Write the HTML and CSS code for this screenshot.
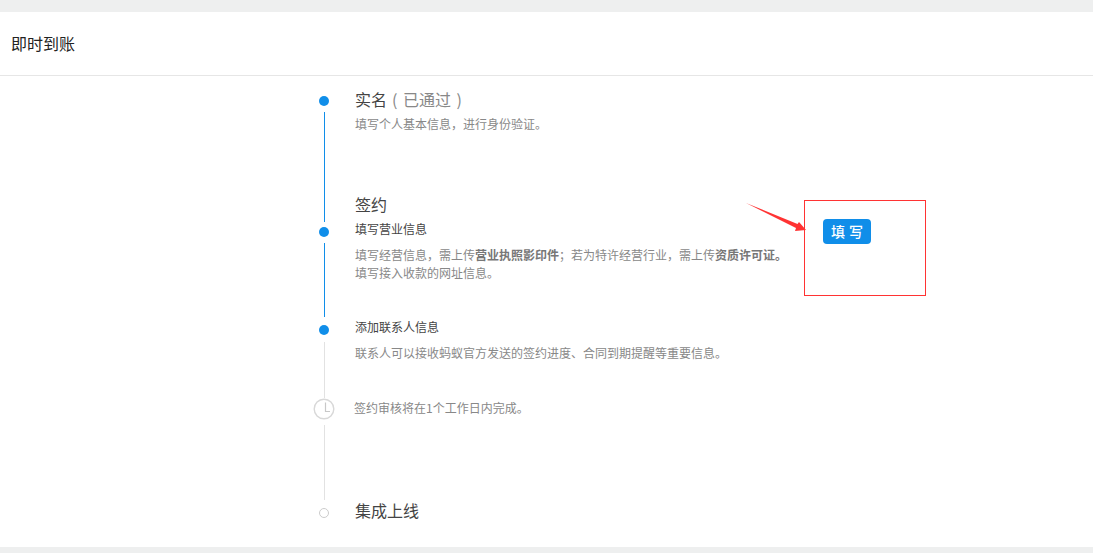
FILE: index.html
```html
<!DOCTYPE html>
<html lang="zh-CN">
<head>
  <meta charset="UTF-8">
  <title>即时到账</title>
  <link rel="stylesheet" href="styles.css">
</head>
<body>

<div class="page">
  <header class="page-header">即时到账</header>

  <main class="flow">
    <div class="rail">
      <span class="dot"></span>
      <span class="line line-first"></span>
      <span class="dot"></span>
      <span class="line line-second"></span>
      <span class="dot"></span>
      <span class="line line-third grey"></span>
      <svg class="clock" width="22" height="22" viewBox="0 0 22 22">
        <circle cx="11" cy="11" r="9.8" fill="none" stroke="#d8d8d8" stroke-width="1.4"/>
        <path d="M12.5 4.5v9h4.5" fill="none" stroke="#c8c8c8" stroke-width="1.2"/>
      </svg>
      <span class="line line-fourth grey"></span>
      <span class="dot ring"></span>
    </div>

    <div class="steps">
      <h2 class="step-title">实名<span class="muted">( 已通过 )</span></h2>
      <p class="desc">填写个人基本信息，进行身份验证。</p>

      <h2 class="step-title sign">签约</h2>
      <h3 class="sub-title first">填写营业信息</h3>
      <p class="desc">填写经营信息，需上传<b>营业执照影印件</b>；若为特许经营行业，需上传<b>资质许可证。</b><br>填写接入收款的网址信息。</p>
      <h3 class="sub-title contact">添加联系人信息</h3>
      <p class="desc">联系人可以接收蚂蚁官方发送的签约进度、合同到期提醒等重要信息。</p>
      <p class="desc review">签约审核将在1个工作日内完成。</p>

      <h2 class="step-title online">集成上线</h2>
    </div>
  </main>

  <div class="mark-box">
    <button class="fill-button" type="button">填 写</button>
  </div>
  <svg class="mark-arrow" width="64" height="32" viewBox="0 0 64 32">
    <polygon points="0,0 51.5,21 53,19 60,27 49,28 50,25" fill="#f33"/>
  </svg>

  <footer class="page-footer"></footer>
</div>

</body>
</html>
```

FILE: styles.css
```css
html, body {
  margin: 0;
  padding: 0;
}

body {
  font-family: "Noto Sans CJK SC", "Liberation Sans", sans-serif;
  background: #fff;
  color: #333;
  overflow: hidden;
}

.page {
  position: relative;
  height: 553px;
  display: flex;
  flex-direction: column;
  border-top: 12px solid #eeefef;
  box-sizing: border-box;
}

.page-header {
  height: 63px;
  line-height: 63px;
  padding-left: 11px;
  font-size: 16px;
  color: #222;
  border-bottom: 1px solid #e6e6e6;
}

.flow {
  flex: 1;
  display: flex;
  padding-left: 313px;
}

.rail {
  width: 22px;
  padding-top: 20px;
  display: flex;
  flex-direction: column;
  align-items: center;
}

.dot {
  flex: none;
  width: 10px;
  height: 10px;
  border-radius: 50%;
  background: #108ee9;
  box-sizing: border-box;
}

.dot.ring {
  background: #fff;
  border: 1px solid #ccc;
  margin-top: 8px;
}

.line {
  flex: none;
  width: 1px;
  margin-top: 6px;
  margin-bottom: 5px;
  background: #108ee9;
}

.line.grey {
  background: #e2e2e2;
}

.line-first { height: 110px; }
.line-second { height: 74px; margin-bottom: 8px; }
.line-third { height: 56px; margin-top: 7px; margin-bottom: 0; }
.line-fourth { height: 75px; margin-top: 5px; margin-bottom: 0; }

.clock {
  flex: none;
}

.steps {
  padding-left: 20px;
  padding-top: 12px;
}

.step-title {
  margin: 0;
  font-size: 16px;
  font-weight: normal;
  line-height: 22px;
  color: #444;
}

.step-title .muted {
  margin-left: 5px;
  word-spacing: 2px;
  color: #888;
}

.step-title.sign { margin-top: 60px; }
.step-title.online { margin-top: 82px; }

.sub-title {
  margin: 0;
  font-size: 12px;
  font-weight: normal;
  line-height: 18px;
  color: #444;
}

.sub-title.first { margin-top: 5px; }
.sub-title.contact { margin-top: 36px; }

.desc {
  margin: 5px 0 0;
  font-size: 12px;
  line-height: 18px;
  color: #888;
}

.sub-title + .desc { margin-top: 8px; }

.desc b {
  color: #777;
}

.desc.review {
  margin-top: 37px;
  margin-left: -1px;
}

.mark-box {
  position: absolute;
  left: 804px;
  top: 188px;
  width: 122px;
  height: 96px;
  box-sizing: border-box;
  border: 1px solid #f33;
  padding: 18px;
}

.fill-button {
  display: block;
  width: 48px;
  height: 25px;
  padding: 0;
  border: none;
  border-radius: 4px;
  background: #108ee9;
  color: #fff;
  font-family: inherit;
  font-size: 14px;
  font-weight: 500;
  line-height: 25px;
  word-spacing: 1px;
}

.mark-arrow {
  position: absolute;
  left: 746px;
  top: 191px;
}

.page-footer {
  height: 6px;
  background: #eeefef;
}
```
